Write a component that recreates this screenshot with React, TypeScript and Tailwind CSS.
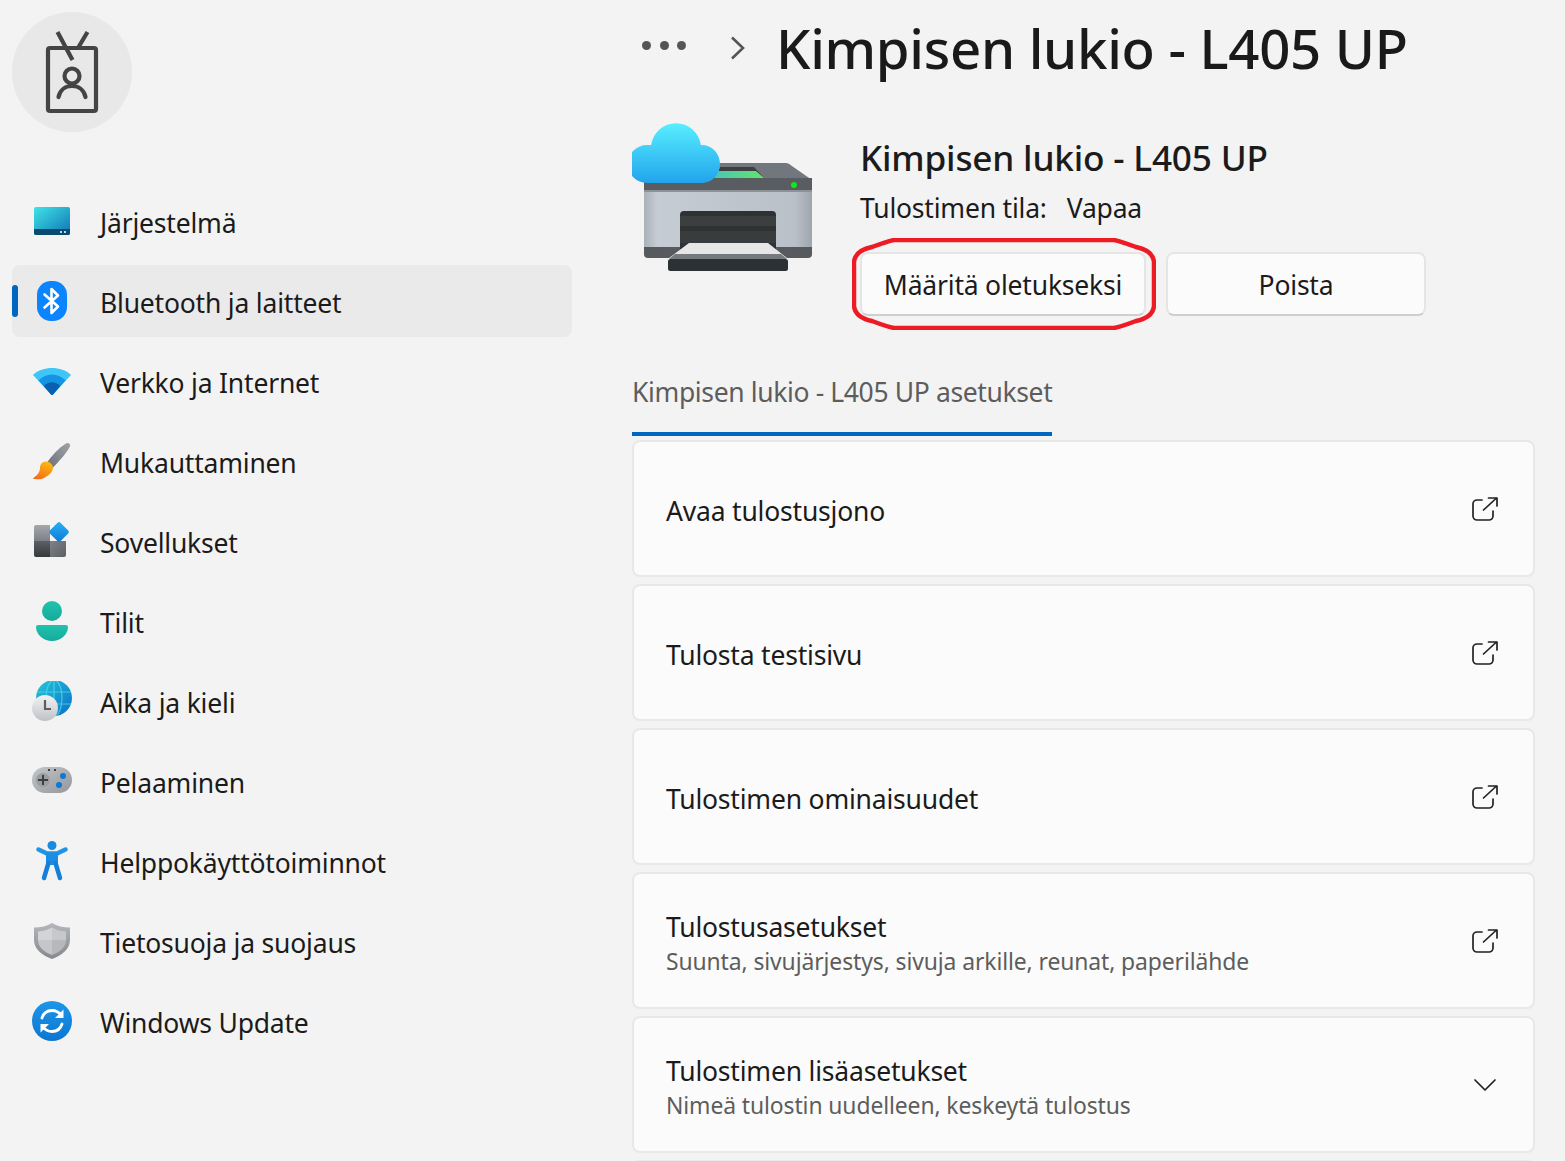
import type { ReactNode } from 'react'

function SystemIcon() {
  return (
    <svg width="40" height="40" viewBox="0 0 40 40">
      <defs>
        <linearGradient id="sys" x1="0" y1="0" x2="1" y2="1">
          <stop offset="0" stopColor="#3fe4e8" />
          <stop offset="1" stopColor="#0f73b4" />
        </linearGradient>
      </defs>
      <rect x="2" y="6" width="36" height="28" rx="2" fill="url(#sys)" />
      <path d="M2 28h36v4a2 2 0 0 1-2 2H4a2 2 0 0 1-2-2z" fill="#0a4a70" />
      <rect x="28" y="30" width="2" height="2" fill="#b7d6e6" />
      <rect x="32" y="30" width="2" height="2" fill="#b7d6e6" />
    </svg>
  )
}

function BluetoothIcon() {
  return (
    <svg width="40" height="40" viewBox="0 0 40 40">
      <rect x="5" y="0" width="30" height="40" rx="14" fill="#0a84ff" />
      <path d="M12.500 13.500 26 25.500 19.500 32V8L26 14.500 12.500 26.500" fill="none" stroke="#fff" strokeWidth="2.600" strokeLinecap="round" strokeLinejoin="round" />
    </svg>
  )
}

function WifiIcon() {
  return (
    <svg width="40" height="40" viewBox="0 0 40 40">
      <path d="M1 14C6 9 13 7 20 7s14 2 19 7L21 33.500a1.500 1.500 0 0 1-2 0z" fill="#3fc6f8" />
      <path d="M6.500 19.500C10 15.500 15 13.500 20 13.500s10 2 13.500 6L21 33.500a1.500 1.500 0 0 1-2 0z" fill="#1395e4" />
      <path d="M12 25c2-2.500 5-3.700 8-3.700s6 1.200 8 3.700l-7 8.500a1.500 1.500 0 0 1-2 0z" fill="#0a5fb0" />
    </svg>
  )
}

function BrushIcon() {
  return (
    <svg width="40" height="40" viewBox="0 0 40 40">
      <defs>
        <linearGradient id="brh" x1="1" y1="0" x2="0" y2="1">
          <stop offset="0" stopColor="#9ea4aa" />
          <stop offset="1" stopColor="#6c7278" />
        </linearGradient>
        <linearGradient id="brb" x1="0.7" y1="0" x2="0.2" y2="1">
          <stop offset="0" stopColor="#fdb813" />
          <stop offset="1" stopColor="#f26b16" />
        </linearGradient>
      </defs>
      <path d="M34 2.500c2-1.500 5 .5 4 3-4 7-11 15-17 21l-6-5c5-7 11-14 19-19z" fill="url(#brh)" />
      <path d="M14 20.500c-4 0-6 3-6 6.500 0 4-3 8-7.500 10.500 5 1.500 10 1 14-2 4-2.500 6.500-5.500 6.500-9 0-3-3.500-6-7-6z" fill="url(#brb)" />
    </svg>
  )
}

function AppsIcon() {
  return (
    <svg width="40" height="40" viewBox="0 0 40 40">
      <defs>
        <linearGradient id="apa" x1="0" y1="0" x2="0" y2="1">
          <stop offset="0" stopColor="#a4a8ad" />
          <stop offset="1" stopColor="#7d8187" />
        </linearGradient>
        <linearGradient id="apb" x1="0" y1="0" x2="0" y2="1">
          <stop offset="0" stopColor="#5c6064" />
          <stop offset="1" stopColor="#36393c" />
        </linearGradient>
        <linearGradient id="apc" x1="0" y1="0" x2="1" y2="1">
          <stop offset="0" stopColor="#7f8388" />
          <stop offset="1" stopColor="#5c6065" />
        </linearGradient>
        <linearGradient id="apd" x1="0" y1="0" x2="1" y2="1">
          <stop offset="0" stopColor="#29b0f5" />
          <stop offset="1" stopColor="#0f78d6" />
        </linearGradient>
      </defs>
      <path d="M2 6a2 2 0 0 1 2-2h14v16H2z" fill="url(#apa)" />
      <path d="M2 20h16v16H4a2 2 0 0 1-2-2z" fill="url(#apb)" />
      <path d="M18 20h16v14a2 2 0 0 1-2 2H18z" fill="url(#apc)" />
      <rect x="19.500" y="3.500" width="15" height="15" rx="2" transform="rotate(45 27 11)" fill="url(#apd)" />
    </svg>
  )
}

function UserIcon() {
  return (
    <svg width="40" height="40" viewBox="0 0 40 40">
      <defs>
        <linearGradient id="usrh" x1="0" y1="0" x2="0" y2="1">
          <stop offset="0" stopColor="#1fc4ae" />
          <stop offset="1" stopColor="#17a99b" />
        </linearGradient>
      </defs>
      <circle cx="20" cy="10" r="10" fill="url(#usrh)" />
      <path d="M4 26a2 2 0 0 1 2-2h28a2 2 0 0 1 2 2c0 8-8 14-16 14S4 34 4 26z" fill="url(#usrh)" />
    </svg>
  )
}

function GlobeIcon() {
  return (
    <svg width="40" height="40" viewBox="0 0 40 40">
      <defs>
        <linearGradient id="glb" x1="0" y1="0" x2="1" y2="1">
          <stop offset="0" stopColor="#26c7d9" />
          <stop offset="1" stopColor="#0b6fc7" />
        </linearGradient>
        <linearGradient id="clk" x1="0" y1="0" x2="0" y2="1">
          <stop offset="0" stopColor="#f1f2f3" />
          <stop offset="1" stopColor="#bfc2c5" />
        </linearGradient>
      </defs>
      <circle cx="22" cy="17" r="18" fill="url(#glb)" />
      <g fill="none" stroke="#4fd9ea" strokeWidth="1.200" opacity="0.8">
        <ellipse cx="22" cy="17" rx="8" ry="18" />
        <path d="M22-1v36M5 11h34M5 23h34" />
      </g>
      <circle cx="13" cy="27" r="13" fill="url(#clk)" />
      <path d="M13 19v9h6" fill="none" stroke="#5b5f63" strokeWidth="2.200" />
    </svg>
  )
}

function GameIcon() {
  return (
    <svg width="40" height="40" viewBox="0 0 40 40">
      <defs>
        <linearGradient id="gam" x1="0" y1="0" x2="1" y2="1">
          <stop offset="0" stopColor="#c3c5c8" />
          <stop offset="1" stopColor="#94979b" />
        </linearGradient>
      </defs>
      <rect x="0" y="6" width="40" height="26" rx="13" fill="url(#gam)" />
      <circle cx="11" cy="19" r="7" fill="#9a9da1" />
      <path d="M6 19h10M11 14v10" stroke="#3c3f42" strokeWidth="2" />
      <circle cx="31" cy="15" r="3" fill="#0f78d6" />
      <circle cx="27" cy="24" r="3" fill="#0f78d6" />
      <rect x="16" y="8" width="2" height="2" fill="#3c3f42" />
      <rect x="22" y="8" width="2" height="2" fill="#3c3f42" />
    </svg>
  )
}

function AccessIcon() {
  return (
    <svg width="40" height="40" viewBox="0 0 40 40">
      <circle cx="20" cy="4.500" r="4.500" fill="#1a8ae0" />
      <path d="M6.500 8.500 15 12.500H25L33.500 8.500" fill="none" stroke="#1f94e6" strokeWidth="4.500" strokeLinecap="round" strokeLinejoin="round" />
      <path d="M14 12h12v12H14z" fill="#1c8de2" />
      <path d="M16.500 22 12 37M23.500 22 28 37" fill="none" stroke="#1580da" strokeWidth="4.500" strokeLinecap="round" />
    </svg>
  )
}

function ShieldIcon() {
  return (
    <svg width="40" height="40" viewBox="0 0 40 40">
      <defs>
        <linearGradient id="shl" x1="0" y1="0" x2="0" y2="1">
          <stop offset="0" stopColor="#b3b6ba" />
          <stop offset="1" stopColor="#85898e" />
        </linearGradient>
      </defs>
      <path d="M20 2c5 3 11 4.500 18 4.500V19c0 9-8 15.500-18 19C10 34.500 2 28 2 19V6.500C9 6.500 15 5 20 2z" fill="url(#shl)" />
      <path d="M20 6.500c4 2.500 9 3.500 14 4V19H20z" fill="#c6c8cc" />
      <path d="M20 6.500c-4 2.500-9 3.500-14 4V19h14z" fill="#d2d4d8" />
      <path d="M6 19h14v15C12 31 6 26 6 19z" fill="#c4c6ca" />
      <path d="M34 19H20v15c8-3 14-8 14-15z" fill="#b6b8bc" />
    </svg>
  )
}

function UpdateIcon() {
  return (
    <svg width="40" height="40" viewBox="0 0 40 40">
      <defs>
        <linearGradient id="upd" x1="0" y1="0" x2="0" y2="1">
          <stop offset="0" stopColor="#1d97e8" />
          <stop offset="1" stopColor="#0b76d0" />
        </linearGradient>
      </defs>
      <circle cx="20" cy="20" r="20" fill="url(#upd)" />
      <path d="M10 17C11.500 12 15.500 9.500 20 9.500c4 0 7 1.800 9.500 5M30 23c-1.500 5-5.500 7.500-10 7.500-4 0-7-1.800-9.500-5" fill="none" stroke="#fff" strokeWidth="2.800" strokeLinecap="round" />
      <path d="M31.500 8.500v8.500h-8.500zM8.500 31.500V23H17z" fill="#fff" />
    </svg>
  )
}

function PrinterIcon() {
  return (
    <svg width="180" height="150" viewBox="0 0 180 150" className="shrink-0">
      <defs>
        <linearGradient id="cloud" x1="0" y1="0" x2="0" y2="1">
          <stop offset="0" stopColor="#58eeff" />
          <stop offset="1" stopColor="#22a4ec" />
        </linearGradient>
        <linearGradient id="body" x1="0" y1="0" x2="1" y2="0">
          <stop offset="0" stopColor="#a9b0b8" />
          <stop offset="0.080" stopColor="#c6ccd3" />
          <stop offset="0.900" stopColor="#b9c0c8" />
          <stop offset="1" stopColor="#9ea5ad" />
        </linearGradient>
        <linearGradient id="win" x1="0" y1="0" x2="1" y2="0">
          <stop offset="0" stopColor="#4bc5b6" />
          <stop offset="1" stopColor="#5fe46c" />
        </linearGradient>
      </defs>
      <path d="M80 40H153c2 0 4 .5 5.500 2L180 57v12H12V55h68z" fill="#71777d" />
      <path d="M88 44H122L132 55H84z" fill="#3b3f42" />
      <path d="M84 48H124L132 55H80z" fill="url(#win)" />
      <path d="M12 55h168v12H12z" fill="#595d61" />
      <circle cx="162" cy="62" r="3" fill="#0fe81a" />
      <rect x="12" y="67" width="168" height="2" fill="#8d9297" />
      <rect x="12" y="69" width="168" height="56" fill="url(#body)" />
      <path d="M12 124h168v7a4 4 0 0 1-4 4H16a4 4 0 0 1-4-4z" fill="#56595d" />
      <path d="M48 92a4 4 0 0 1 4-4h88a4 4 0 0 1 4 4v34H48z" fill="#2f3233" />
      <rect x="48" y="93" width="96" height="10" fill="#3c3f40" />
      <rect x="48" y="108" width="96" height="12" fill="#393c3d" />
      <path d="M57 120h79l19 15H37z" fill="#e6e6e6" />
      <path d="M43 131h106l6 5H37z" fill="#747a7e" />
      <rect x="36" y="136" width="120" height="12" rx="2.500" fill="#2e3133" />
      <path d="M15 60a19 19 0 0 1 0-38h4.200A25 25 0 0 1 68.800 22H70a18 19 0 0 1 0 38z" fill="url(#cloud)" />
    </svg>
  )
}

function OpenIcon() {
  return (
    <svg width="28" height="28" viewBox="0 0 28 28" fill="none" stroke="#222" strokeWidth="1.700" strokeLinecap="round" strokeLinejoin="round" className="mt-0.5">
      <path d="M11 4H6a4 4 0 0 0-4 4v12a4 4 0 0 0 4 4h12a4 4 0 0 0 4-4v-5" />
      <path d="M12.500 14 25.500 2M17.500 2h8.500v8" />
    </svg>
  )
}

function ChevronDown() {
  return (
    <svg width="28" height="28" viewBox="0 0 28 28" fill="none" stroke="#222" strokeWidth="1.700" strokeLinecap="round" strokeLinejoin="round">
      <path d="M4 9 14 19 24 9" />
    </svg>
  )
}

type NavEntry = { label: string; icon: ReactNode; active?: boolean }

const NAV: NavEntry[] = [
  { label: 'Järjestelmä', icon: <SystemIcon /> },
  { label: 'Bluetooth ja laitteet', icon: <BluetoothIcon />, active: true },
  { label: 'Verkko ja Internet', icon: <WifiIcon /> },
  { label: 'Mukauttaminen', icon: <BrushIcon /> },
  { label: 'Sovellukset', icon: <AppsIcon /> },
  { label: 'Tilit', icon: <UserIcon /> },
  { label: 'Aika ja kieli', icon: <GlobeIcon /> },
  { label: 'Pelaaminen', icon: <GameIcon /> },
  { label: 'Helppokäyttötoiminnot', icon: <AccessIcon /> },
  { label: 'Tietosuoja ja suojaus', icon: <ShieldIcon /> },
  { label: 'Windows Update', icon: <UpdateIcon /> },
]

const CARDS = [
  { title: 'Avaa tulostusjono' },
  { title: 'Tulosta testisivu' },
  { title: 'Tulostimen ominaisuudet' },
  { title: 'Tulostusasetukset', sub: 'Suunta, sivujärjestys, sivuja arkille, reunat, paperilähde' },
  { title: 'Tulostimen lisäasetukset', sub: 'Nimeä tulostin uudelleen, keskeytä tulostus', expand: true },
]

function Sidebar() {
  return (
    <aside className="w-[632px] shrink-0 pl-3 pt-3">
      <div className="flex size-[120px] items-center justify-center rounded-full bg-[#e8e8e8]">
        <svg width="120" height="120" viewBox="0 0 120 120" fill="none" stroke="#444" strokeWidth="4.200" strokeLinejoin="round">
          <rect x="36" y="36" width="48" height="63" rx="2" />
          <path d="M45.500 20 60.500 48M75.500 20 66 36" />
          <circle cx="60" cy="64" r="7.500" />
          <path d="M46.500 85c1.500-7 7-11 13.500-11s12 4 13.500 11" strokeLinecap="round" />
        </svg>
      </div>
      <nav className="mt-[53px] flex w-[560px] flex-col gap-2">
        {NAV.map(item => (
          <div
            key={item.label}
            className={`relative flex h-[72px] items-center gap-7 rounded-lg pl-5 ${item.active ? 'bg-[#eaeaea]' : ''}`}
          >
            {item.active && <span className="absolute left-0 top-5 h-8 w-1.5 rounded-full bg-[#0067c0]" />}
            {item.icon}
            <span className="pt-1 text-[26.5px] leading-9 text-[#1b1b1b] tracking-[-0.2px]">{item.label}</span>
          </div>
        ))}
      </nav>
    </aside>
  )
}

function Main() {
  return (
    <main className="w-[903px] shrink-0">
      <div className="flex h-[96px] items-center">
        <div className="mb-1.5 ml-2.5 flex w-[44px] justify-between">
          <span className="size-[9px] rounded-full bg-[#555]" />
          <span className="size-[9px] rounded-full bg-[#555]" />
          <span className="size-[9px] rounded-full bg-[#555]" />
        </div>
        <svg width="20" height="28" viewBox="0 0 20 28" fill="none" stroke="#555" strokeWidth="2.600" className="ml-[43px]">
          <path d="M3 3.500 14 14 3 24.500" />
        </svg>
        <h1 className="ml-[27px] text-[54.5px] font-medium leading-none text-[#1a1a1a] tracking-[-0.3px]">Kimpisen lukio - L405 UP</h1>
      </div>

      <div className="mt-[27px] flex">
        <PrinterIcon />
        <div className="ml-12 pt-3">
          <h2 className="text-[35.2px] font-medium leading-[44px] text-[#1b1b1b] tracking-[-0.2px]">Kimpisen lukio - L405 UP</h2>
          <div className="mt-[11px] flex gap-5 text-[26.5px] leading-9 text-[#1b1b1b] tracking-[-0.2px]">
            <span>Tulostimen tila:</span>
            <span>Vapaa</span>
          </div>
          <div className="mt-[26px] flex gap-5">
            <div className="relative">
              <button className="flex h-16 w-[286px] items-center justify-center rounded-lg border-2 border-[#e5e5e5] border-b-[#cfcfcf] bg-[#fbfbfb] pt-1 text-[26.5px] text-[#1b1b1b] tracking-[-0.2px]">
                Määritä oletukseksi
              </button>
              <svg width="304" height="92" viewBox="0 0 304 92" fill="none" stroke="#ed1c24" strokeWidth="4.500" className="pointer-events-none absolute -left-2 -top-3.5">
                <path d="M2 24C3 15 10 11 20 9 28 6 36 3 42 2H262C268 3 276 6 284 9 294 11 301 15 302 24V68C301 77 294 81 284 83 276 86 268 89 262 90H42C36 89 28 86 20 83 10 81 3 77 2 68z" />
              </svg>
            </div>
            <button className="flex h-16 w-[260px] items-center justify-center rounded-lg border-2 border-[#e5e5e5] border-b-[#cfcfcf] bg-[#fbfbfb] pt-1 text-[26.5px] text-[#1b1b1b] tracking-[-0.2px]">
              Poista
            </button>
          </div>
        </div>
      </div>

      <div className="mt-[58px] w-fit border-b-4 border-[#0067c0] pb-[22px] text-[26.5px] leading-9 text-[#5d5d5d] tracking-[-0.37px]">
        Kimpisen lukio - L405 UP asetukset
      </div>

      <div className="mt-1 flex flex-col gap-[7px]">
        {CARDS.map(card => (
          <div
            key={card.title}
            className="flex h-[137px] items-center justify-between rounded-lg border-2 border-[#e8e8e8] bg-[#fbfbfb] pl-8 pr-[34px]"
          >
            <div className={card.sub ? 'pt-1.5' : 'pt-1'}>
              <div className="text-[26.5px] leading-9 text-[#1b1b1b] tracking-[-0.2px]">{card.title}</div>
              {card.sub && <div className="pt-px text-[22.9px] leading-8 text-[#5d5d5d] tracking-[-0.1px]">{card.sub}</div>}
            </div>
            {card.expand ? <ChevronDown /> : <OpenIcon />}
          </div>
        ))}
        <div className="h-[137px] rounded-lg border-2 border-[#e8e8e8] bg-[#fbfbfb]" />
      </div>
    </main>
  )
}

export default function App() {
  return (
    <div className="flex h-[1161px] w-[1565px] overflow-hidden bg-[#f3f3f3] font-['Noto_Sans','Open_Sans',sans-serif]">
      <Sidebar />
      <Main />
    </div>
  )
}
